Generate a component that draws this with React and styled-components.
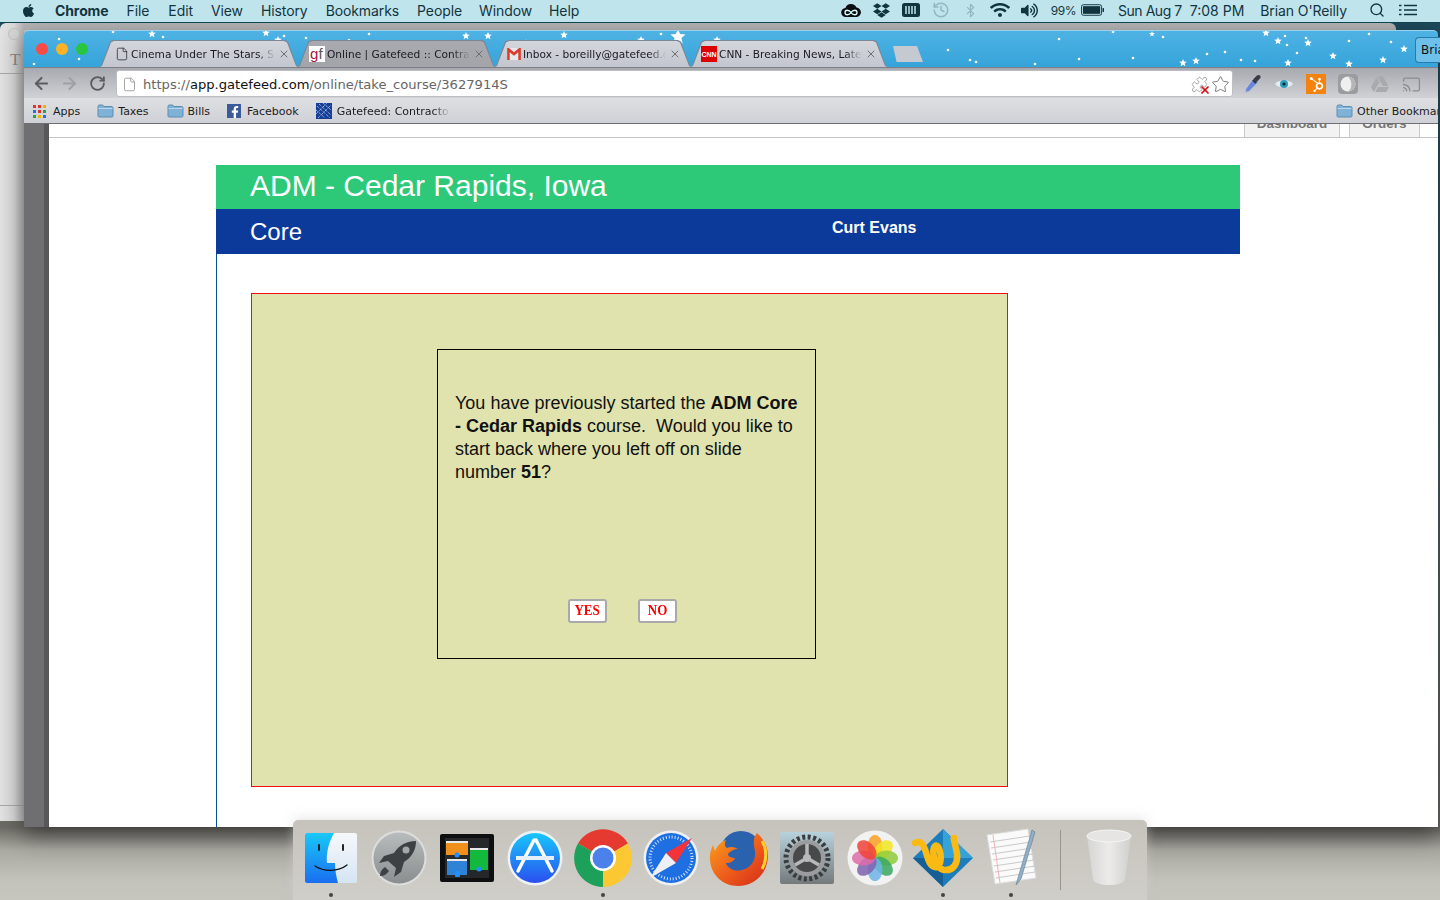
import React from "react";
import styled, { createGlobalStyle } from "styled-components";
import { FaApple, FaDropbox, FaFacebookF, FaGoogleDrive, FaHubspot, FaVolumeUp, FaWifi } from "react-icons/fa";
import { ArrowLeft, ArrowRight, Bluetooth, Cast, File, History, Puzzle, RotateCw, Search, Star, X } from "lucide-react";

const GlobalStyle = createGlobalStyle`
  html, body { margin: 0; padding: 0; background: #bdbcb5; }
  * { box-sizing: border-box; }
`;

const Desktop = styled.div`
  position: relative;
  width: 1440px;
  height: 900px;
  overflow: hidden;
  font-family: "Liberation Sans", Arial, sans-serif;
  background: linear-gradient(#1d4a5c 0, #1d4a5c 30px, #6b6a64 827px, #a9a8a1 850px, #c3c2bb 880px, #c6c5be 900px);
`;

/* menu bar */
const MenuBar = styled.div`
  position: relative;
  z-index: 5;
  height: 23px;
  display: flex;
  align-items: center;
  padding: 0 0 2px 21px;
  background: #bfe4ec;
  border-bottom: 1px solid #0f4350;
  color: #12343f;
  font-family: Inter, sans-serif;
  font-size: 14px;
`;
const MenuItem = styled.span`
  margin-left: ${({ $gap }) => $gap}px;
  font-weight: ${({ $bold }) => ($bold ? 700 : 400)};
  letter-spacing: -0.1px;
  white-space: nowrap;
`;
const StatusGroup = styled.div`
  margin-left: auto;
  display: flex;
  align-items: center;
  height: 100%;
  padding-right: 23px;
  color: #12343f;
`;
const StatusIcon = styled.span`
  display: flex;
  margin-left: ${({ $gap }) => $gap}px;
  opacity: ${({ $dim }) => ($dim ? 0.25 : 1)};
`;
const Clock = styled.span`
  margin-left: ${({ $gap }) => $gap}px;
  font-size: ${({ $small }) => ($small ? 12 : 14)}px;
  letter-spacing: ${({ $tight }) => $tight || 0}px;
  white-space: nowrap;
`;

/* window behind chrome */
const BackWindow = styled.div`
  position: absolute;
  left: 0;
  top: 23px;
  width: 1396px;
  height: 798px;
  background: linear-gradient(90deg, #e2e2e2 0, #d8d8d8 14px, #b5b5b5 24px);
  border-radius: 6px 6px 0 0;
  color: #8a8a8a;
`;
const BackDot = styled.span`
  position: absolute;
  left: 8px;
  top: 5px;
  width: 12px;
  height: 12px;
  border-radius: 50%;
  background: #d6d6d6;
  border: 1px solid #c2c2c2;
`;
const BackGlyph = styled.span`
  position: absolute;
  left: 10px;
  top: 27px;
  font: 17px "Liberation Serif", serif;
`;
const BackRule = styled.span`
  position: absolute;
  left: 0;
  top: ${({ $top }) => $top}px;
  width: 24px;
  height: 1px;
  background: #a9a9a9;
`;

/* chrome window */
const Browser = styled.div`
  position: absolute;
  left: 24px;
  top: 30px;
  width: 1414px;
  height: 797px;
  display: flex;
  flex-direction: column;
  box-shadow: 0 8px 22px rgba(0, 0, 0, 0.45);
`;
const TabStrip = styled.div`
  position: relative;
  height: 37px;
  flex: none;
  display: flex;
  align-items: flex-end;
  padding-left: 76px;
  background: linear-gradient(#4fb2e4, #35a4da);
  border-top: 1px solid #9cd0ea;
  border-radius: 5px 5px 0 0;
`;
const Stars = styled.svg`
  position: absolute;
  left: 0;
  top: 0;
  pointer-events: none;
`;
const TrafficLights = styled.div`
  position: absolute;
  left: 12px;
  top: 12px;
  display: flex;
  gap: 8px;
`;
const Light = styled.span`
  width: 12px;
  height: 12px;
  border-radius: 50%;
  background: ${({ $color }) => $color};
`;
const tabShape = "polygon(0 100%, 2px 96%, 11px 6%, 14px 0, calc(100% - 14px) 0, calc(100% - 11px) 6%, calc(100% - 2px) 96%, 100% 100%)";
const Tab = styled.div`
  position: relative;
  isolation: isolate;
  width: ${({ $width }) => $width}px;
  height: 26px;
  display: flex;
  align-items: center;
  padding: 0 ${({ $end }) => $end || 10}px 0 ${({ $pad }) => $pad}px;
  font-family: "DejaVu Sans", sans-serif;
  font-size: 10.6px;
  color: #1a1a22;
  &::before {
    content: "";
    position: absolute;
    inset: 0;
    z-index: -1;
    background: ${({ $active }) => ($active ? "linear-gradient(#a8aab0, #a2a4aa)" : "linear-gradient(#d4d6dd, #c3c6ce)")};
    clip-path: ${tabShape};
  }
  &::after {
    content: "";
    position: absolute;
    inset: -1px -1px 0;
    z-index: -2;
    background: #7c8796;
    clip-path: ${tabShape};
  }
  & > svg { flex: none; }
`;
const TabTitle = styled.span`
  flex: 1;
  min-width: 0;
  margin-left: 2px;
  overflow: hidden;
  white-space: nowrap;
  -webkit-mask-image: linear-gradient(90deg, #000 88%, transparent);
  mask-image: linear-gradient(90deg, #000 88%, transparent);
`;
const TabClose = styled.span`
  display: flex;
  color: #6d6f76;
  margin-left: 3px;
`;
const NewTab = styled.div`
  width: 30px;
  height: 16px;
  margin: 0 0 5px 6px;
  background: #c5c9d2;
  clip-path: polygon(12% 100%, 0 0, 80% 0, 100% 100%);
`;
const ProfileButton = styled.div`
  position: absolute;
  right: -2px;
  top: 6px;
  width: 25px;
  height: 26px;
  padding: 5px 0 0 5px;
  overflow: hidden;
  white-space: nowrap;
  border: 1px solid #2a7aa8;
  border-right: 0;
  border-radius: 4px 0 0 4px;
  background: #6cc0ea;
  color: #111;
  font: 12px "DejaVu Sans", sans-serif;
`;

const Toolbar = styled.div`
  height: 31px;
  flex: none;
  display: flex;
  align-items: center;
  background: linear-gradient(#a7a9b0, #d0d2d6);
  border-top: 1px solid #7d7f85;
`;
const NavButton = styled.span`
  display: flex;
  margin-left: ${({ $gap }) => $gap}px;
  color: ${({ $dim }) => ($dim ? "#9ea0a6" : "#5a5c62")};
`;
const Omnibox = styled.div`
  width: 1117px;
  height: 27px;
  margin-left: 10px;
  display: flex;
  align-items: center;
  padding: 2px 2px 0 5px;
  background: #fff;
  border: 1px solid #bdbec2;
  border-radius: 3px;
  color: #666;
  font-family: "DejaVu Sans", sans-serif;
  font-size: 13.1px;
  white-space: nowrap;
`;
const Url = styled.span`
  margin-left: 6px;
  b { font-weight: 400; color: #111; }
`;
const OmniEnd = styled.span`
  margin-left: auto;
  display: flex;
  align-items: center;
  gap: 3px;
  color: #777;
`;
const BlockedExt = styled.span`
  position: relative;
  display: flex;
  color: #999;
  svg + svg { position: absolute; right: -3px; bottom: -3px; color: #d40d12; }
`;
const ExtSlot = styled.span`
  display: flex;
  width: 20px;
  height: 20px;
  align-items: center;
  justify-content: center;
  margin: 2px 0 0 ${({ $gap }) => $gap}px;
  color: ${({ $color }) => $color || "#8b8c90"};
  background: ${({ $bg }) => $bg || "none"};
`;

const BookmarkBar = styled.div`
  height: 26px;
  flex: none;
  display: flex;
  align-items: center;
  padding: 1px 0 0 9px;
  background: linear-gradient(#dedfe2, #d0d1d6);
  border-bottom: 1px solid #6e6f72;
  color: #1c1c20;
  font-family: "DejaVu Sans", sans-serif;
  font-size: 11px;
`;
const Bookmark = styled.span`
  display: flex;
  align-items: center;
  gap: ${({ $inner }) => $inner || 4}px;
  margin-left: ${({ $gap }) => $gap}px;
  white-space: nowrap;
  & > svg { flex: none; }
`;
const AppsGrid = styled.span`
  display: grid;
  grid-template-columns: repeat(3, 3px);
  gap: 2px;
`;
const AppsCell = styled.i`
  width: 3px;
  height: 3px;
  background: ${({ $color }) => $color};
`;
const FbBadge = styled.span`
  width: 14px;
  height: 14px;
  display: flex;
  align-items: flex-end;
  justify-content: flex-end;
  background: #3b5a9a;
  color: #fff;
`;
const FadeText = styled.span`
  width: 113px;
  overflow: hidden;
  -webkit-mask-image: linear-gradient(90deg, #000 85%, transparent);
  mask-image: linear-gradient(90deg, #000 85%, transparent);
`;
const OtherBookmarks = styled(Bookmark)`
  margin-left: auto;
  width: 102px;
  overflow: hidden;
`;

/* page */
const PageFrame = styled.div`
  flex: 1;
  min-height: 0;
  display: flex;
`;
const SideRail = styled.div`
  width: 25px;
  flex: none;
  background: #6f6f71;
  border-right: 5px solid #58585a;
`;
const Page = styled.div`
  flex: 1;
  background: #fff;
  overflow: hidden;
`;
const SiteNav = styled.div`
  height: 14px;
  display: flex;
  justify-content: flex-end;
  gap: 9px;
  padding-right: 18px;
  border-bottom: 1px solid #c6c6c6;
`;
const SiteNavTab = styled.div`
  width: ${({ $width }) => $width}px;
  height: 13px;
  overflow: hidden;
  text-align: center;
  background: #f2f2f2;
  border: solid #c8c8c8;
  border-width: 0 1px;
  color: #777;
  font-size: 13.5px;
  font-weight: 700;
  line-height: 16px;
  & > span { display: block; margin-top: -8px; }
`;
const Course = styled.div`
  width: 1024px;
  margin: 27px 0 0 167px;
  display: flex;
  flex-direction: column;
  height: 700px;
`;
const Title = styled.div`
  height: 44px;
  padding-left: 34px;
  background: #2dc979;
  color: #fff;
  font-size: 30px;
  line-height: 42px;
`;
const SubTitle = styled.div`
  height: 45px;
  display: flex;
  padding-left: 34px;
  background: #0c3a9a;
  color: #fff;
  font-size: 24px;
  line-height: 45px;
`;
const Learner = styled.span`
  margin-left: 530px;
  font-size: 16px;
  font-weight: 700;
  line-height: 37px;
`;
const CourseBody = styled.div`
  flex: 1;
  padding: 39px 0 0 34px;
  border-left: 1px solid #0b4f9c;
`;
const Slide = styled.div`
  width: 757px;
  height: 494px;
  padding: 55px 0 0 185px;
  background: #e0e3ae;
  border: 1px solid #ee1111;
`;
const Dialog = styled.div`
  width: 379px;
  height: 310px;
  display: flex;
  flex-direction: column;
  padding: 42px 17px 35px;
  border: 1px solid #000;
  color: #111;
  font-size: 18px;
  line-height: 23px;
`;
const DialogActions = styled.div`
  margin-top: auto;
  display: flex;
  gap: 31px;
  padding-left: 113px;
`;
const ChoiceButton = styled.button`
  width: 39px;
  height: 24px;
  padding: 0 0 3px;
  background: #fff;
  border: 2px solid #a9a9a9;
  border-radius: 3px;
  color: #f00;
  font-family: "Liberation Serif", serif;
  font-size: 15.5px;
  font-weight: 700;
  line-height: 18px;
  span { display: inline-block; transform: scaleX(0.84); }
`;

/* dock */
const Dock = styled.div`
  position: absolute;
  left: 293px;
  top: 820px;
  width: 854px;
  height: 80px;
  display: flex;
  padding-left: 4px;
  background: linear-gradient(#c6c3bd, #d0cec8);
  border-radius: 5px 5px 0 0;
  box-shadow: 0 -2px 12px rgba(210, 210, 210, 0.5);
`;
const DockSlot = styled.div`
  position: relative;
  width: 68px;
  height: 80px;
  display: flex;
  justify-content: center;
  align-items: center;
  padding-bottom: 4px;
  &::after {
    content: "";
    display: ${({ $running }) => ($running ? "block" : "none")};
    position: absolute;
    left: 32px;
    bottom: 3px;
    width: 4px;
    height: 4px;
    border-radius: 50%;
    background: #444;
  }
`;
const DockDivider = styled.div`
  width: 30px;
  display: flex;
  justify-content: center;
  padding: 10px 0 10px;
  &::before {
    content: "";
    width: 1px;
    background: #98958f;
  }
`;

const starList = [
  [152, 33, 4], [266, 32, 4], [278, 39, 4], [466, 35, 4], [488, 35, 4], [564, 34, 4], [641, 39, 4], [678, 36, 8], [717, 39, 4],
  [1152, 33, 3], [1183, 62, 4], [1196, 60, 4], [1288, 62, 4], [1333, 55, 4], [1349, 63, 4], [1383, 59, 4], [1266, 32, 4], [1278, 40, 4], [1308, 42, 4], [1404, 48, 4],
];
const dotList = [
  [59, 38], [113, 31], [163, 36], [284, 35], [306, 37], [349, 39], [369, 33], [417, 41], [34, 63], [79, 58], [526, 40], [661, 33], [948, 49],
  [1059, 38], [1163, 36], [1113, 31], [970, 59], [976, 61], [1035, 63], [1079, 58], [1133, 57], [1207, 53], [1225, 51], [1241, 59], [1255, 60], [1297, 52],
  [1285, 35], [1287, 44], [1306, 37], [1349, 40], [1369, 33], [1391, 41],
];

function starPoints(cx, cy, r) {
  const pts = [];
  for (let i = 0; i < 10; i++) {
    const rad = i % 2 ? r * 0.45 : r;
    const a = (Math.PI / 5) * i - Math.PI / 2;
    pts.push(`${cx + rad * Math.cos(a)},${cy + rad * Math.sin(a)}`);
  }
  return pts.join(" ");
}

const StarField = () => (
  <Stars width="1414" height="37" viewBox="24 30 1414 37">
    {dotList.map(([x, y]) => (
      <circle key={`${x}-${y}`} cx={x} cy={y} r="1.300" fill="#fff" />
    ))}
    {starList.map(([x, y, r]) => (
      <polygon key={`${x}-${y}`} points={starPoints(x, y, r)} fill="#fff" />
    ))}
  </Stars>
);

const Folder = () => (
  <svg width="17" height="14" viewBox="0 0 17 14">
    <path d="M1 2.500C1 1.700 1.500 1 2.300 1h3.400l1.200 1.500h7.800c.7 0 1.300.6 1.300 1.300V12c0 .7-.6 1-1.300 1H2.300C1.500 13 1 12.700 1 12z" fill="#7fb2d6" stroke="#5d8db0" />
    <path d="M1.500 4.500h14" stroke="#b9d6ea" />
  </svg>
);

const GfFavicon = () => (
  <svg width="16" height="16" viewBox="0 0 16 16">
    <rect width="16" height="16" fill="#fff" />
    <text x="1" y="13" fontFamily="Liberation Sans" fontSize="15" fill="#a5103a">g</text>
    <text x="9.500" y="13" fontFamily="Liberation Sans" fontSize="15" fill="#555">f</text>
  </svg>
);
const GmailFavicon = () => (
  <svg width="14" height="12" viewBox="0 0 16 14">
    <rect width="16" height="14" fill="#e8e8e8" />
    <path d="M0 0v14h3V5l5 4 5-4v9h3V0h-2L8 5 2 0z" fill="#d93c30" />
  </svg>
);
const CnnFavicon = () => (
  <svg width="16" height="16" viewBox="0 0 16 16">
    <rect width="16" height="16" fill="#d00" />
    <text x="8" y="11" textAnchor="middle" fontFamily="Liberation Sans" fontWeight="700" fontSize="7" fill="#fff">CNN</text>
  </svg>
);
const GatefeedFavicon = () => (
  <svg width="16" height="16" viewBox="0 0 16 16">
    <rect width="16" height="16" fill="#153f97" />
    <path d="M1 3 14 15M0 7l9 8M3 1l12 11M7 0l8 7M2 15 15 2M0 11 11 0" stroke="#c8d4ef" strokeWidth="1" strokeDasharray="1 1" />
  </svg>
);

const CloudIcon = () => (
  <svg width="20" height="15" viewBox="0 0 20 15">
    <path d="M5 14a4.500 4.500 0 0 1-.6-9A6 6 0 0 1 15.500 4.600 4.700 4.700 0 0 1 15 14z" fill="#0b0f12" />
    <path d="M4 9.500c0-3 4-3 6 0s6 3 6 0-4-3-6 0-6 3-6 0z" fill="none" stroke="#dff" strokeWidth="1.300" />
  </svg>
);
const MemIcon = () => (
  <svg width="18" height="14" viewBox="0 0 18 14">
    <rect width="18" height="14" rx="2.500" fill="#12343f" />
    <path d="M4 3v8M7 3v8M10 3v8M13 3v8" stroke="#bfe4ec" strokeWidth="1.500" />
  </svg>
);
const BatteryIcon = () => (
  <svg width="23" height="12" viewBox="0 0 24 12">
    <rect x=".5" y=".5" width="21" height="11" rx="2" fill="none" stroke="#12343f" />
    <rect x="2" y="2" width="18" height="8" fill="#12343f" />
    <rect x="22.500" y="4" width="1.500" height="4" fill="#12343f" />
  </svg>
);
const ListIcon = () => (
  <svg width="18" height="12" viewBox="0 0 18 12">
    <path d="M5 1.500h13M5 6h13M5 10.500h13" stroke="#12343f" strokeWidth="1.600" />
    <path d="M0 1.500h2.500M0 6h2.500M0 10.500h2.500" stroke="#12343f" strokeWidth="1.600" />
  </svg>
);

const DropperIcon = () => (
  <svg width="20" height="20" viewBox="0 0 20 20">
    <path d="M12 3.500 16.500 8 7 17.500l-4 1 1-4z" fill="#6a86d8" stroke="#b9c2d6" />
    <path d="M11 6 14 9" stroke="#333" strokeWidth="2" />
    <path d="M11.500 5 15 1.500c1-1 2.500-.5 3 0s1 2 0 3L14.500 8z" fill="#3a3c42" />
  </svg>
);
const EyeIcon = () => (
  <svg width="20" height="14" viewBox="0 0 20 14">
    <path d="M1 7c4-5 14-5 18 0-4 5-14 5-18 0z" fill="#e4ecef" />
    <circle cx="10" cy="7" r="4" fill="#2c9ebc" />
    <circle cx="10" cy="7" r="1.600" fill="#0c2730" />
  </svg>
);
const ShieldBall = () => (
  <svg width="20" height="20" viewBox="0 0 20 20">
    <rect width="20" height="20" rx="4" fill="#9b9ca0" />
    <circle cx="10" cy="10" r="7.500" fill="#efefef" />
    <path d="M10 2.500a7.500 7.500 0 0 1 0 15c4-2 5-10 0-15z" fill="#b5b5b7" />
  </svg>
);

const FinderIcon = () => (
  <svg width="52" height="50" viewBox="0 1 52 50">
    <defs>
      <linearGradient id="fb" x1="0" y1="0" x2="0" y2="1"><stop offset="0" stopColor="#19c8f8" /><stop offset="1" stopColor="#1a6ef0" /></linearGradient>
      <linearGradient id="fw" x1="0" y1="0" x2="0" y2="1"><stop offset="0" stopColor="#f6f8fa" /><stop offset="1" stopColor="#d5e5f3" /></linearGradient>
    </defs>
    <rect width="52" height="50" y="1" rx="2" fill="url(#fw)" />
    <path d="M2 1h27c-5 9-8 19-7 30h8c0 6 1 13 3 20H2a2 2 0 0 1-2-2V3a2 2 0 0 1 2-2z" fill="url(#fb)" />
    <path d="M14 13v5M38 13v5" stroke="#222" strokeWidth="2" strokeLinecap="round" />
    <path d="M10 34c9 6 23 6 32-1" fill="none" stroke="#111" strokeWidth="1.300" strokeLinecap="round" />
  </svg>
);
const LaunchpadIcon = () => (
  <svg width="56" height="56" viewBox="0 0 56 56">
    <defs>
      <linearGradient id="lp" x1="0" y1="0" x2="0" y2="1"><stop offset="0" stopColor="#b9bcbc" /><stop offset="1" stopColor="#8b8e8e" /></linearGradient>
    </defs>
    <circle cx="28" cy="28" r="27.500" fill="#dcdedd" />
    <circle cx="28" cy="28" r="25.500" fill="url(#lp)" />
    <path d="M45 11c-9 0-17 4-22 12l-10 3-5 7 9-2 8 7-2 9 7-5 3-10c8-5 12-12 12-21z" fill="#3e4143" />
    <path d="M14 37c-3 2-5 5-5 9 4 0 7-2 9-5z" fill="#3e4143" />
    <circle cx="35" cy="20" r="3.500" fill="#a4a8a8" />
  </svg>
);
const MissionIcon = () => (
  <svg width="54" height="48" viewBox="0 0 54 48">
    <rect width="54" height="48" rx="2" fill="#0e0f10" />
    <rect x="5" y="4" width="44" height="40" fill="#262728" />
    <rect x="6" y="7" width="22" height="14" fill="#ef8f1c" />
    <rect x="6" y="7" width="22" height="2" fill="#e8e8e8" />
    <rect x="30" y="14" width="18" height="22" fill="#13b93c" />
    <rect x="30" y="14" width="18" height="2" fill="#e8e8e8" />
    <rect x="7" y="25" width="20" height="16" fill="#2f83d6" />
    <rect x="7" y="25" width="20" height="2" fill="#e8e8e8" />
    <circle cx="17" cy="21" r="2.500" fill="#1e90ff" />
    <circle cx="39" cy="35" r="2.500" fill="#1e90ff" />
    <rect x="15" y="37" width="5" height="6" rx="1" fill="#1e90ff" />
  </svg>
);
const AppStoreIcon = () => (
  <svg width="56" height="56" viewBox="0 0 56 56">
    <defs>
      <linearGradient id="as" x1="0" y1="0" x2="0" y2="1"><stop offset="0" stopColor="#17c7fb" /><stop offset="1" stopColor="#2a4ff0" /></linearGradient>
    </defs>
    <circle cx="28" cy="28" r="27.500" fill="#eef2f6" />
    <circle cx="28" cy="28" r="25" fill="url(#as)" />
    <path d="M29 10 45 41M27 10 11 41" stroke="#fff" strokeWidth="3.500" strokeLinecap="round" />
    <path d="M9 28h38" stroke="#e6eef8" strokeWidth="4" />
  </svg>
);
const ChromeIcon = () => (
  <svg width="58" height="58" viewBox="-29 -29 58 58">
    <path d="M0 0-25 -14.500A29 29 0 0 1 25 -14.500z" fill="#e53a2f" />
    <path d="M0 0 25-14.500A29 29 0 0 1 0 29z" fill="#fbc833" />
    <path d="M0 0V29A29 29 0 0 1-25-14.500z" fill="#1da05a" />
    <circle r="13" fill="#fff" />
    <circle r="10.500" fill="#4c80ea" />
  </svg>
);
const SafariIcon = () => (
  <svg width="56" height="56" viewBox="-28 -28 56 56">
    <circle r="27.500" fill="#eef0f3" />
    <circle r="25" fill="#1d6fe2" />
    <circle r="21" fill="none" stroke="#cfe2fa" strokeWidth="3" strokeDasharray="1 2" />
    <path d="M21-20 5 5-5-5z" fill="#f2343a" />
    <path d="M-21 20-5-5 5 5z" fill="#eef0f3" />
  </svg>
);
const FirefoxIcon = () => (
  <svg width="60" height="60" viewBox="0 0 60 60">
    <defs>
      <linearGradient id="ff" x1="0" y1="0" x2="1" y2="1"><stop offset="0" stopColor="#f9a51c" /><stop offset=".55" stopColor="#ee5a1b" /><stop offset="1" stopColor="#d02a1a" /></linearGradient>
    </defs>
    <circle cx="32" cy="24" r="21" fill="#2a62ae" />
    <path d="M48 5c9 8 13 19 10 30-3 14-15 23-29 23C14 58 2 47 1 32c-.5-6 1-11 3-15l2 6c2-5 6-9 11-11-2 4-1 7 1 8 4-2 8-1 11 1-4 0-8 2-10 5 0 3 4 4 7 4-2 5-7 5-9 5 2 6 9 9 16 7 9-2 14-10 13-18-1-7-3-13 2-19z" fill="url(#ff)" />
    <path d="M53 13c5 8 5 19 0 28" stroke="#fbd02c" strokeWidth="3" fill="none" />
  </svg>
);
const SettingsIcon = () => (
  <svg width="54" height="52" viewBox="0 0 54 52">
    <defs>
      <linearGradient id="ss" x1="0" y1="0" x2="0" y2="1"><stop offset="0" stopColor="#b7d2dc" /><stop offset="1" stopColor="#757a7c" /></linearGradient>
    </defs>
    <rect width="54" height="52" rx="2" fill="url(#ss)" />
    <circle cx="27" cy="26" r="21" fill="none" stroke="#3b3c3e" strokeWidth="5" strokeDasharray="3 2.500" />
    <circle cx="27" cy="26" r="18" fill="#9b9c9e" />
    <circle cx="27" cy="26" r="14" fill="#48494b" />
    <path d="M27 26V12M27 26 15 33M27 26l12 7" stroke="#b7b8ba" strokeWidth="3.500" />
    <circle cx="27" cy="26" r="4" fill="#b7b8ba" />
  </svg>
);
const petalColors = ["#f9a024", "#f3e522", "#8fcc3b", "#37a85f", "#6cb5e8", "#7f62b0", "#df6ba9", "#ee4338"];
const PhotosIcon = () => (
  <svg width="56" height="56" viewBox="-28 -28 56 56">
    <circle r="27.500" fill="#f2f2f2" />
    {petalColors.map((color, i) => (
      <ellipse key={color} cx="0" cy="-11.500" rx="7.500" ry="11.500" fill={color} opacity="0.85" transform={`rotate(${i * 45})`} />
    ))}
  </svg>
);
const RopeIcon = () => (
  <svg width="62" height="62" viewBox="0 0 62 62">
    <path d="M31 2 61 31 31 60 1 31z" fill="#1d7dbb" />
    <path d="M31 2 61 31 31 31z" fill="#35a2d8" />
    <path d="M1 31 31 60V31z" fill="#155e96" />
    <path d="M3 16c8-4 10 6 13 16 3 9 10 11 12 4s-1-20-5-17-1 22 9 24c9 1 14-6 13-16-1-7-4-16-3-16" fill="none" stroke="#fbb914" strokeWidth="6.500" strokeLinecap="round" />
  </svg>
);
const TextEditIcon = () => (
  <svg width="51" height="60" viewBox="0 0 51 60">
    <path d="M1 7 42 1 50 50 9 56z" fill="#fafafa" stroke="#ddd" />
    <path d="M4 14 44 8M5 20 45 14M6 26 46 20M7 32 47 26M8 38 48 32M9 44 49 38M10 50 49 44" stroke="#bdbdbd" strokeWidth=".8" />
    <path d="M7 7 14 55" stroke="#f0b3b8" />
    <path d="M46 2 32 50 30 57 35 51 49 4z" fill="#8fb0c8" stroke="#66788a" strokeWidth=".6" />
  </svg>
);
const TrashIcon = () => (
  <svg width="46" height="58" viewBox="0 0 46 58">
    <defs>
      <linearGradient id="tr" x1="0" y1="0" x2="1" y2="0"><stop offset="0" stopColor="#d5d5d3" /><stop offset=".5" stopColor="#ecebe9" /><stop offset="1" stopColor="#cfcfcd" /></linearGradient>
    </defs>
    <path d="M1 7 7 50c1 8 31 8 32 0l6-43z" fill="url(#tr)" />
    <ellipse cx="23" cy="7" rx="22" ry="6" fill="#e6e5e3" stroke="#f6f6f5" />
  </svg>
);

const dockApps = [
  { name: "finder", Icon: FinderIcon, running: true },
  { name: "launchpad", Icon: LaunchpadIcon },
  { name: "mission", Icon: MissionIcon },
  { name: "appstore", Icon: AppStoreIcon },
  { name: "chrome", Icon: ChromeIcon, running: true },
  { name: "safari", Icon: SafariIcon },
  { name: "firefox", Icon: FirefoxIcon },
  { name: "settings", Icon: SettingsIcon },
  { name: "photos", Icon: PhotosIcon },
  { name: "rope", Icon: RopeIcon, running: true },
  { name: "textedit", Icon: TextEditIcon, running: true },
];

const menuItems = [
  ["File", 18], ["Edit", 19], ["View", 18], ["History", 18], ["Bookmarks", 18], ["People", 18], ["Window", 17], ["Help", 17],
];
const appsColors = ["#e0332c", "#e0332c", "#f0b400", "#2a6fe0", "#e0332c", "#2aa24a", "#2aa24a", "#f0b400", "#2a6fe0"];

const tabs = [
  { title: "Cinema Under The Stars, Summer", width: 198, pad: 15, end: 8, icon: <File size={14} strokeWidth={1.2} /> },
  { title: "Online | Gatefeed :: Contractor", width: 197, pad: 11, icon: <GfFavicon />, active: true },
  { title: "Inbox - boreilly@gatefeed.com", width: 196, pad: 12, icon: <GmailFavicon /> },
  { title: "CNN - Breaking News, Latest", width: 196, pad: 10, icon: <CnnFavicon /> },
];

export default function App() {
  return (
    <Desktop>
      <GlobalStyle />
      <MenuBar>
        <FaApple size={15} />
        <MenuItem $gap={19} $bold>Chrome</MenuItem>
        {menuItems.map(([label, gap]) => (
          <MenuItem key={label} $gap={gap}>{label}</MenuItem>
        ))}
        <StatusGroup>
          <CloudIcon />
          <StatusIcon $gap={12}><FaDropbox size={17} /></StatusIcon>
          <StatusIcon $gap={12}><MemIcon /></StatusIcon>
          <StatusIcon $gap={12} $dim><History size={18} /></StatusIcon>
          <StatusIcon $gap={13} $dim><Bluetooth size={15} /></StatusIcon>
          <StatusIcon $gap={12}><FaWifi size={20} /></StatusIcon>
          <StatusIcon $gap={11}><FaVolumeUp size={17} /></StatusIcon>
          <Clock $gap={13} $small $tight={-0.5}>99%</Clock>
          <StatusIcon $gap={5}><BatteryIcon /></StatusIcon>
          <Clock $gap={14} $tight={-0.45}>Sun Aug 7</Clock>
          <Clock $gap={8}>7:08 PM</Clock>
          <Clock $gap={16} $tight={-0.1}>Brian O'Reilly</Clock>
          <StatusIcon $gap={22}><Search size={16} /></StatusIcon>
          <StatusIcon $gap={14}><ListIcon /></StatusIcon>
        </StatusGroup>
      </MenuBar>

      <BackWindow>
        <BackDot />
        <BackGlyph>T</BackGlyph>
        <BackRule $top={50} />
        <BackRule $top={782} />
      </BackWindow>

      <Browser>
        <TabStrip>
          <StarField />
          <TrafficLights>
            <Light $color="#fc4a46" />
            <Light $color="#fdb225" />
            <Light $color="#28c63f" />
          </TrafficLights>
          {tabs.map((tab) => (
            <Tab key={tab.title} $width={tab.width} $pad={tab.pad} $end={tab.end} $active={tab.active}>
              {tab.icon}
              <TabTitle>{tab.title}</TabTitle>
              <TabClose><X size={12} strokeWidth={2} /></TabClose>
            </Tab>
          ))}
          <NewTab />
          <ProfileButton>Brian</ProfileButton>
        </TabStrip>

        <Toolbar>
          <NavButton $gap={8}><ArrowLeft size={19} strokeWidth={2.6} /></NavButton>
          <NavButton $gap={9} $dim><ArrowRight size={19} strokeWidth={2.6} /></NavButton>
          <NavButton $gap={10}><RotateCw size={17} strokeWidth={2.6} /></NavButton>
          <Omnibox>
            <File size={15} strokeWidth={1.2} color="#888" />
            <Url>https://<b>app.gatefeed.com</b>/online/take_course/3627914S</Url>
            <OmniEnd>
              <BlockedExt>
                <Puzzle size={17} strokeWidth={1.2} />
                <X size={12} strokeWidth={3.4} />
              </BlockedExt>
              <Star size={19} strokeWidth={1.2} />
            </OmniEnd>
          </Omnibox>
          <ExtSlot $gap={9}><DropperIcon /></ExtSlot>
          <ExtSlot $gap={12}><EyeIcon /></ExtSlot>
          <ExtSlot $gap={12} $bg="#f5820d" $color="#fff"><FaHubspot size={15} /></ExtSlot>
          <ExtSlot $gap={12}><ShieldBall /></ExtSlot>
          <ExtSlot $gap={12} $color="#a9aaae"><FaGoogleDrive size={18} /></ExtSlot>
          <ExtSlot $gap={11}><Cast size={19} strokeWidth={1.6} /></ExtSlot>
        </Toolbar>

        <BookmarkBar>
          <Bookmark $gap={0} $inner={7}>
            <AppsGrid>
              {appsColors.map((color, i) => <AppsCell key={i} $color={color} />)}
            </AppsGrid>
            Apps
          </Bookmark>
          <Bookmark $gap={17}><Folder />Taxes</Bookmark>
          <Bookmark $gap={18}><Folder />Bills</Bookmark>
          <Bookmark $gap={17} $inner={6}>
            <FbBadge><FaFacebookF size={12} /></FbBadge>
            Facebook
          </Bookmark>
          <Bookmark $gap={17} $inner={5}>
            <GatefeedFavicon />
            <FadeText>Gatefeed: Contractor</FadeText>
          </Bookmark>
          <OtherBookmarks><Folder />Other Bookmarks</OtherBookmarks>
        </BookmarkBar>

        <PageFrame>
          <SideRail />
          <Page>
            <SiteNav>
              <SiteNavTab $width={96}><span>Dashboard</span></SiteNavTab>
              <SiteNavTab $width={71}><span>Orders</span></SiteNavTab>
            </SiteNav>
            <Course>
              <Title>ADM - Cedar Rapids, Iowa</Title>
              <SubTitle>
                Core
                <Learner>Curt Evans</Learner>
              </SubTitle>
              <CourseBody>
                <Slide>
                  <Dialog>
                    <div>
                      You have previously started the <b>ADM Core - Cedar Rapids</b> course.&nbsp; Would you like to start back where you left off on slide number <b>51</b>?
                    </div>
                    <DialogActions>
                      <ChoiceButton><span>YES</span></ChoiceButton>
                      <ChoiceButton><span>NO</span></ChoiceButton>
                    </DialogActions>
                  </Dialog>
                </Slide>
              </CourseBody>
            </Course>
          </Page>
        </PageFrame>
      </Browser>

      <Dock>
        {dockApps.map(({ name, Icon, running }, i) => (
          <React.Fragment key={name}>
            <DockSlot $running={running}><Icon /></DockSlot>
            {i === dockApps.length - 1 && <DockDivider />}
          </React.Fragment>
        ))}
        <DockSlot><TrashIcon /></DockSlot>
      </Dock>
    </Desktop>
  );
}
